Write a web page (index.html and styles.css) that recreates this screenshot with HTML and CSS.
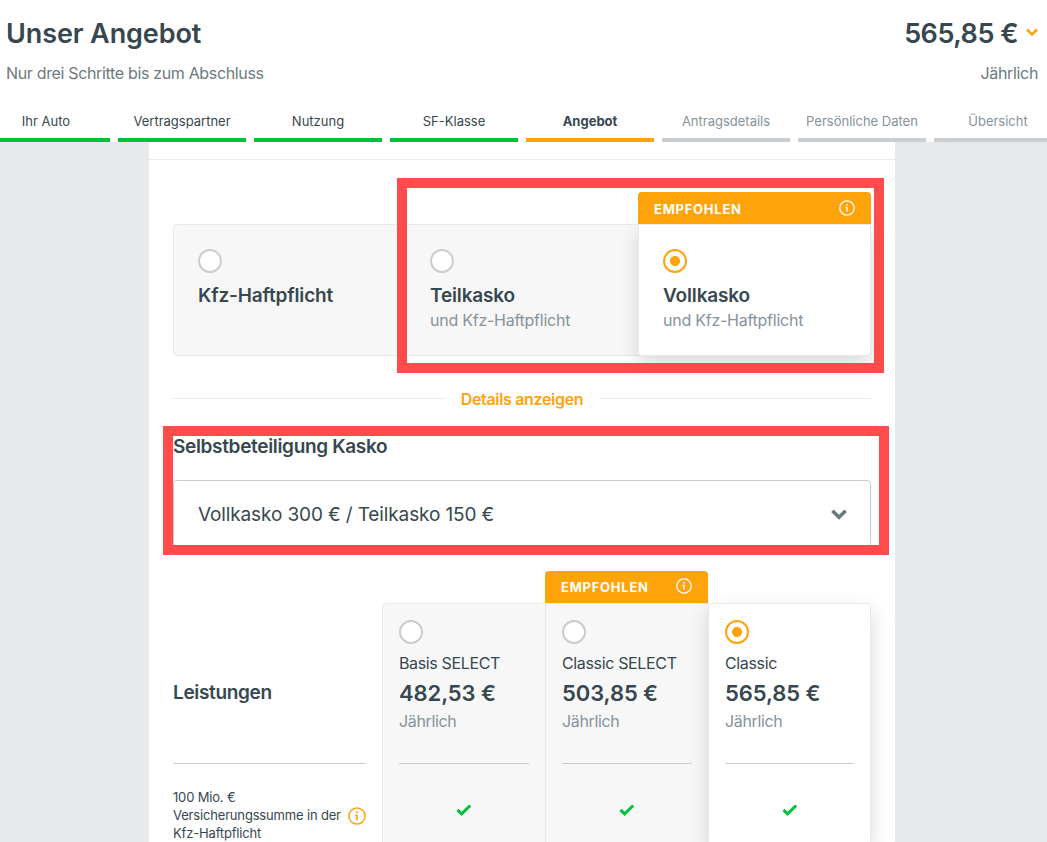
FILE: index.html
```html
<!DOCTYPE html>
<html lang="de">
<head>
    <meta charset="UTF-8">
    <meta name="viewport" content="width=device-width, initial-scale=1.0">
    <title>Unser Angebot</title>
    <link rel="stylesheet" href="styles.css">
</head>
<body>
    <svg class="symbols" aria-hidden="true">
        <symbol id="info" viewBox="0 0 18 18">
            <circle cx="9" cy="9" r="8.1" fill="none" stroke="currentColor" stroke-width="1.5"/>
            <path d="M8.1 4.6h1.8v1.7H8.1zM7.3 7.7h2.5v5.6H8.2V8.9h-.9z" fill="currentColor"/>
        </symbol>
        <symbol id="check" viewBox="0 0 16 12">
            <path d="M1.5 5.9 5.6 9.8 14.2 1.5" fill="none" stroke="currentColor" stroke-width="3"/>
        </symbol>
        <symbol id="chevron" viewBox="0 0 16 11">
            <path d="M1.4 1.7 8 8.3l6.6-6.6" fill="none" stroke="currentColor" stroke-width="3.6"/>
        </symbol>
    </svg>

    <header class="header">
        <div class="header-row">
            <h1 class="title">Unser Angebot</h1>
            <div class="total">
                <span>565,85 €</span>
                <svg class="total-arrow" viewBox="0 0 12 9"><path d="M1 1.5 6 6.500l5-5" fill="none" stroke="currentColor" stroke-width="2.5"/></svg>
            </div>
        </div>
        <div class="header-row sub-row">
            <span>Nur drei Schritte bis zum Abschluss</span>
            <span>Jährlich</span>
        </div>
        <nav class="steps">
            <div class="step done">Ihr Auto</div>
            <div class="step done">Vertragspartner</div>
            <div class="step done">Nutzung</div>
            <div class="step done">SF-Klasse</div>
            <div class="step active">Angebot</div>
            <div class="step">Antragsdetails</div>
            <div class="step">Persönliche Daten</div>
            <div class="step">Übersicht</div>
        </nav>
    </header>

    <main class="content">
        <section class="coverage">
            <div class="option">
                <span class="radio"></span>
                <div class="option-title">Kfz-Haftpflicht</div>
            </div>
            <div class="option">
                <span class="radio"></span>
                <div class="option-title">Teilkasko</div>
                <div class="option-text">und Kfz-Haftpflicht</div>
            </div>
            <div class="option selected">
                <div class="badge">EMPFOHLEN<svg class="icon-info"><use href="#info"/></svg></div>
                <span class="radio checked"></span>
                <div class="option-title">Vollkasko</div>
                <div class="option-text">und Kfz-Haftpflicht</div>
            </div>
        </section>

        <div class="details"><a class="details-link">Details anzeigen</a></div>

        <h2 class="section-title">Selbstbeteiligung Kasko</h2>
        <div class="select">
            <span>Vollkasko 300 € / Teilkasko 150 €</span>
            <svg class="select-arrow"><use href="#chevron"/></svg>
        </div>

        <section class="plans">
            <div class="benefits">
                <div class="plan-head benefits-head"><h2 class="section-title">Leistungen</h2></div>
                <div class="benefit">
                    <span>100 Mio. €<br>Versicherungssumme in der<br>Kfz-Haftpflicht</span>
                    <svg class="icon-info"><use href="#info"/></svg>
                </div>
            </div>
            <div class="plan">
                <div class="plan-head">
                    <span class="radio"></span>
                    <div class="plan-name">Basis SELECT</div>
                    <div class="plan-price">482,53 €</div>
                    <div class="plan-period">Jährlich</div>
                </div>
                <svg class="icon-check"><use href="#check"/></svg>
            </div>
            <div class="plan">
                <div class="badge">EMPFOHLEN<svg class="icon-info"><use href="#info"/></svg></div>
                <div class="plan-head">
                    <span class="radio"></span>
                    <div class="plan-name">Classic SELECT</div>
                    <div class="plan-price">503,85 €</div>
                    <div class="plan-period">Jährlich</div>
                </div>
                <svg class="icon-check"><use href="#check"/></svg>
            </div>
            <div class="plan selected">
                <div class="plan-head">
                    <span class="radio checked"></span>
                    <div class="plan-name">Classic</div>
                    <div class="plan-price">565,85 €</div>
                    <div class="plan-period">Jährlich</div>
                </div>
                <svg class="icon-check"><use href="#check"/></svg>
            </div>
        </section>
    </main>

    <div class="marker marker-coverage"></div>
    <div class="marker marker-deductible"></div>
</body>
</html>
```
FILE: styles.css
```css
* {
    box-sizing: border-box;
}

body {
    margin: 0;
    height: 842px;
    position: relative;
    overflow: hidden;
    background-color: #e7e9eb;
    color: #37474f;
    font-family: Inter, "Liberation Sans", sans-serif;
}

h1, h2 {
    margin: 0;
}

.symbols {
    display: none;
}

.header {
    height: 142px;
    background-color: white;
    overflow: hidden;
}

.header-row {
    display: flex;
    justify-content: space-between;
    padding: 0 9px 0 6px;
}

.title, .total {
    font-size: 27px;
    font-weight: 600;
    line-height: 34px;
    letter-spacing: -0.1px;
    margin-top: 17px;
}

.total {
    display: flex;
    align-items: center;
    gap: 8px;
    letter-spacing: -0.5px;
}

.total-arrow {
    width: 12px;
    height: 9px;
    margin-bottom: 3px;
    color: #ffa30a;
}

.sub-row {
    margin-top: 12px;
    font-size: 16px;
    line-height: 20px;
    letter-spacing: -0.34px;
    color: #6c7a80;
}

.steps {
    display: flex;
    gap: 8px;
    margin: 28px 0 0 -18px;
}

.step {
    flex: 0 0 128px;
    height: 31px;
    border-bottom: 4px solid #c9cdd0;
    color: #87929a;
    font-size: 13px;
    line-height: 20px;
    text-align: center;
    white-space: nowrap;
}

.step.done {
    border-color: #00c13a;
    color: #37474f;
}

.step.active {
    border-color: #ffa30a;
    color: #37474f;
    font-weight: 700;
}

.content {
    width: 746px;
    margin-left: 149px;
    padding: 18px 24px 0;
    background: linear-gradient(#e7e9eb, #e7e9eb) 0 17px / 100% 1px no-repeat white;
}

.coverage {
    display: grid;
    grid-template-columns: repeat(3, 1fr);
    height: 132px;
    margin-top: 64px;
    border: 1px solid #e7e9eb;
    border-radius: 4px;
    background-color: #f7f7f7;
}

.option {
    padding: 24px 24px 0;
}

.option.selected {
    position: relative;
    margin: -1px -1px -1px 0;
    border-radius: 0 0 4px 4px;
}

.selected {
    background-color: white;
    border: 1px solid #e7e9eb;
    box-shadow: 0 8px 20px rgba(0, 0, 0, 0.15);
}

.radio {
    display: block;
    width: 24px;
    height: 24px;
    border: 2px solid #c9cdd0;
    border-radius: 50%;
    background-color: white;
}

.radio.checked {
    border-color: #ffa30a;
    background: radial-gradient(circle, #ffa30a 4.7px, white 5.3px);
}

.option-title, .section-title {
    font-size: 19px;
    font-weight: 600;
    line-height: 24px;
    letter-spacing: -0.33px;
}

.option-title {
    margin-top: 11px;
    letter-spacing: -0.15px;
}

.option-text {
    font-size: 16px;
    line-height: 24px;
    letter-spacing: -0.25px;
    color: #87929a;
}

.badge {
    position: absolute;
    left: -1px;
    right: -1px;
    top: -33px;
    height: 32px;
    display: flex;
    justify-content: space-between;
    align-items: center;
    padding: 0 16px;
    border-radius: 4px 4px 0 0;
    background-color: #ffa30a;
    color: white;
    font-size: 13px;
    font-weight: 700;
    letter-spacing: 0.75px;
}

.icon-info {
    width: 18px;
    height: 18px;
    flex: none;
    color: #ffa30a;
}

.badge .icon-info {
    width: 16px;
    height: 16px;
    margin-top: -2px;
    color: white;
}

.option .badge {
    padding-top: 2px;
}

.details {
    display: flex;
    align-items: center;
    gap: 16px;
    margin-top: 30px;
    height: 25px;
}

.details::before, .details::after {
    content: "";
    flex: 1;
    height: 1px;
    background-color: #e7e9eb;
}

.details-link {
    padding-top: 1px;
    color: #ffa30a;
    font-size: 16px;
    font-weight: 600;
    line-height: 24px;
    letter-spacing: -0.33px;
}

.content > .section-title {
    margin-top: 24px;
}

.select {
    display: flex;
    justify-content: space-between;
    align-items: center;
    height: 67px;
    margin-top: 21px;
    padding: 2px 23px 0 24px;
    border: 1px solid #c9cdd0;
    border-radius: 4px;
    font-size: 19px;
    letter-spacing: -0.12px;
}

.select-arrow {
    width: 16px;
    height: 11px;
    margin-bottom: 1px;
    color: #6c7a80;
}

.plans {
    display: grid;
    grid-template-columns: 209px repeat(3, 163px);
    height: 239px;
    margin-top: 56px;
}

.plan {
    position: relative;
    padding: 16px 16px 0;
    border: 1px solid #e7e9eb;
    border-right: none;
    border-bottom: none;
    border-top-left-radius: 4px;
    background-color: #f7f7f7;
}

.plan + .plan {
    border-top-left-radius: 0;
}

.plan.selected {
    border-right: 1px solid #e7e9eb;
    border-top-right-radius: 4px;
    background-color: white;
}

.plan .badge {
    right: 0;
}

.plan-head {
    height: 144px;
    border-bottom: 1px solid #c9cdd0;
}

.plan-name {
    margin-top: 7px;
    font-size: 16px;
    line-height: 24px;
    letter-spacing: -0.35px;
    white-space: nowrap;
}

.plan-price {
    margin-top: 2px;
    font-size: 22px;
    font-weight: 600;
    line-height: 32px;
    letter-spacing: -0.1px;
}

.plan-period {
    font-size: 16px;
    line-height: 24px;
    letter-spacing: -0.35px;
    color: #87929a;
}

.icon-check {
    display: block;
    width: 16px;
    height: 12px;
    margin: 40px auto 0;
    color: #00c13a;
}

.benefits {
    padding: 17px 16px 0 0;
}

.benefits-head {
    padding-top: 61px;
}

.benefit {
    display: flex;
    justify-content: space-between;
    align-items: center;
    margin-top: 24px;
    font-size: 13px;
    line-height: 18px;
    letter-spacing: -0.17px;
    white-space: nowrap;
}

.benefit .icon-info {
    margin-top: 1px;
}

/* red highlight frames laid over the page */
.marker {
    position: absolute;
    border: 10px solid rgba(255, 55, 55, 0.9);
}

.marker-coverage {
    left: 397px;
    top: 178px;
    width: 487px;
    height: 195px;
}

.marker-deductible {
    left: 163px;
    top: 426px;
    width: 726px;
    height: 129px;
}
```
